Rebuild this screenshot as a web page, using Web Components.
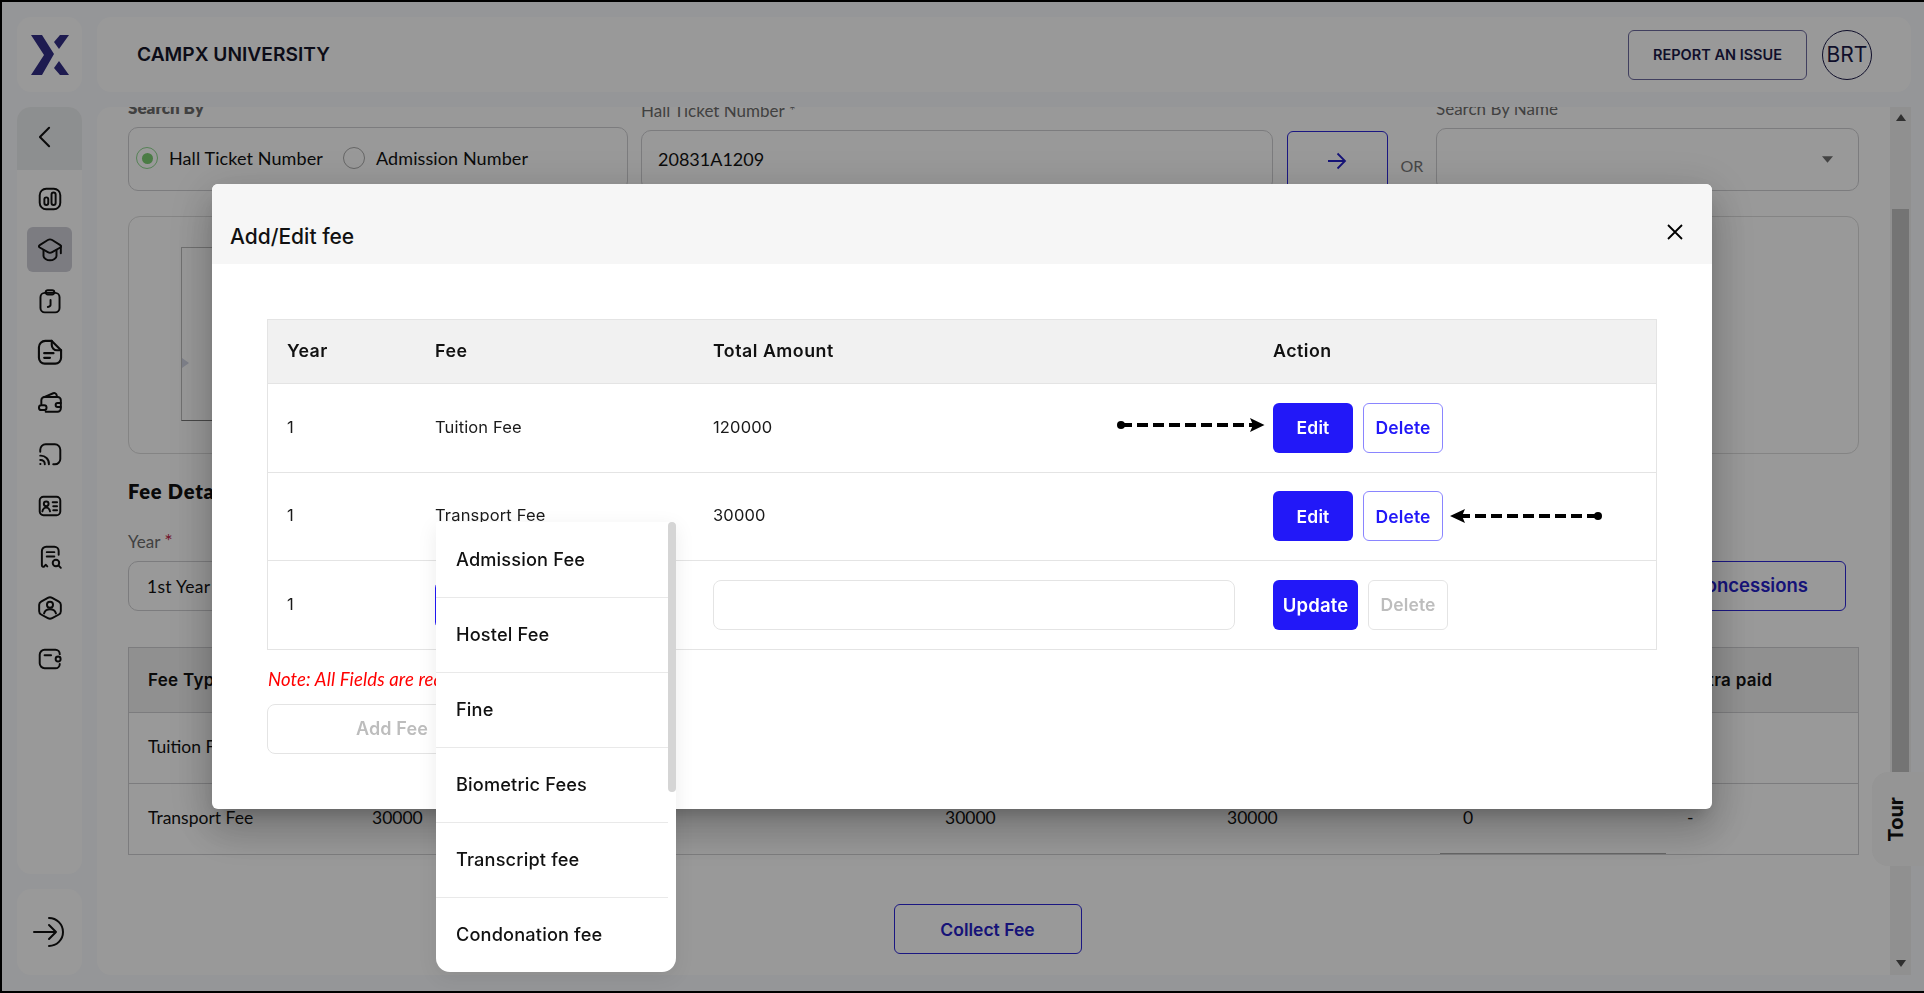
<!DOCTYPE html>
<html lang="en">
<head>
<meta charset="utf-8">
<title>CampX University</title>
<style>
	html, body { margin: 0; height: 100%; }
	body { box-sizing: border-box; height: 993px; overflow: hidden; border: 2px solid #000; border-right: 0; background: #f8fafd; font-family: "Inter", "Liberation Sans", sans-serif; color: #121212; }
</style>
</head>
<body>
<cx-app>
	<cx-sidebar slot="side"></cx-sidebar>
	<cx-header slot="top"></cx-header>
	<cx-fee-form slot="main"></cx-fee-form>
</cx-app>
<cx-tour></cx-tour>
<cx-modal heading="Add/Edit fee">
	<cx-fee-table></cx-fee-table>
</cx-modal>

<script>
const ICONS = {
	chart: `<rect x="2.5" y="2.5" width="19" height="19" rx="6"/><rect x="6.8" y="10.5" width="3.6" height="7" rx="1.8"/><rect x="13.4" y="6" width="3.8" height="11.5" rx="1.9"/>`,
	grad: `<path d="M10 2.800c1.300-.8 2.700-.8 4 0l7.500 4.700c1 .6 1 1.600 0 2.200l-7.500 4.300c-1.300.8-2.700.8-4 0l-7.500-4.300c-1-.6-1-1.600 0-2.200z"/><path d="M6 12v5.500c0 2 3 4 6 4s6-2 6-4V12M22 8.500V15"/>`,
	clock: `<rect x="3.200" y="4.500" width="17.600" height="18" rx="4"/><rect x="8" y="2" width="8" height="4" rx="2"/><path d="M12.500 11v4.500c0 1-1 1.800-2.500 2"/>`,
	doc: `<path d="M8 2.500h5.500l8 8V17a5 5 0 0 1-5 5H7.500a5 5 0 0 1-5-5V8A5.500 5.500 0 0 1 8 2.500z"/><path d="M13.500 2.500v3.500a4.500 4.500 0 0 0 4.500 4.500h3.500M7 13h8M7 17h5"/>`,
	wallets: `<path d="M4 13V9.500a3 3 0 0 1 3-3h12a3 3 0 0 1 3 3V17a3 3 0 0 1-3 3H8"/><path d="M6.500 6.500 15 3c1.500-.5 3 .4 3.200 2l.1 1.500"/><rect x="1.800" y="14" width="7" height="4.500" rx="2.200"/><path d="M22 12h-3a1.800 1.800 0 0 0 0 3.600h3"/>`,
	cast: `<path d="M3 10V8a5 5 0 0 1 5-5h8.500a5 5 0 0 1 5 5v8.500a5 5 0 0 1-5 5H15"/><path d="M3 13.500a7.500 7.500 0 0 1 8 8M3 17.500a3.800 3.800 0 0 1 4.200 4M3 21.200h.2"/>`,
	id: `<rect x="2.500" y="3.500" width="19" height="17" rx="3.500"/><circle cx="8.500" cy="10" r="2.200"/><path d="M5 17c.5-2.500 2-3.500 3.500-3.500s3 1 3.500 3.500M14.500 8.500h4M15 12.200h3.500M15 16h3.500"/>`,
	search: `<path d="M20 10V6.500a4 4 0 0 0-4-4H8.500a4 4 0 0 0-4 4V19.500c0 1.500 1.300 2 2.300 1l1.200-1.300 1.500 1.500"/><path d="M9 7.500h7M9 11.500h7"/><circle cx="17.500" cy="17.500" r="3"/><path d="m20 20 2 2"/>`,
	hex: `<path d="M10 2.600a4 4 0 0 1 4 0l6.200 3.500a3.500 3.500 0 0 1 1.800 3V15a3.500 3.500 0 0 1-1.800 3L14 21.400a4 4 0 0 1-4 0L3.800 18A3.500 3.500 0 0 1 2 15V9.100a3.500 3.500 0 0 1 1.800-3z"/><circle cx="12" cy="9" r="2.800"/><path d="M6.500 17c.7-2.500 3-3.800 5.500-3.800s4.800 1.300 5.500 3.800"/>`,
	wallet: `<path d="M21 7.500a4 4 0 0 0-4-4H7a4.500 4.500 0 0 0-4.500 4.500v8A4.500 4.500 0 0 0 7 20.500h10a4 4 0 0 0 4-4"/><circle cx="19.500" cy="12" r="2.300"/><path d="M7 8.500h6"/>`
};
const NAV = ["chart", "grad", "clock", "doc", "wallets", "cast", "id", "search", "hex", "wallet"];

customElements.define("cx-app",
	class extends HTMLElement {
		connectedCallback(){
			this.attachShadow({ mode: "open" }).innerHTML = `
				<style>
					:host { display: grid; grid-template-columns: 65px 1fr; grid-template-rows: 75px 868px; column-gap: 15px; row-gap: 15px; padding: 15px 13px 0 15px; box-sizing: border-box; height: 989px; }
				</style>
				<slot name="side"></slot>
				<slot name="top"></slot>
				<slot name="main"></slot>
			`;
		}
	}
);

customElements.define("cx-sidebar",
	class extends HTMLElement {
		connectedCallback(){
			const items = NAV.map((name, i) => `
				<div class="item ${i === 1 ? "active" : ""}">
					<svg viewBox="0 0 24 24" width="${name === "doc" ? 28 : 26}" height="${name === "doc" ? 28 : 26}">${ICONS[name]}</svg>
				</div>`).join("");
			this.attachShadow({ mode: "open" }).innerHTML = `
				<style>
					:host { display: flex; flex-direction: column; grid-row: 1 / 3; gap: 15px; }
					.card { background: #fff; border-radius: 14px; }
					.logo { height: 75px; display: flex; align-items: center; justify-content: center; }
					.nav { flex: 1; overflow: hidden; }
					.back { height: 63px; background: #eceef0; display: flex; align-items: center; padding: 0 0 3px 21px; box-sizing: border-box; }
					.items { display: flex; flex-direction: column; align-items: center; padding-top: 6px; }
					.item { width: 45px; height: 45px; margin-bottom: 6.200px; border-radius: 6px; display: flex; align-items: center; justify-content: center; }
					.item.active { background: #cfcfd8; }
					svg { fill: none; stroke: #111; stroke-width: 1.800; stroke-linecap: round; stroke-linejoin: round; }
					.out { height: 86px; display: flex; align-items: center; justify-content: center; }
				</style>
				<div class="card logo">
					<svg viewBox="0 0 38 40" width="38" height="40" style="stroke:none;fill:#322e86">
						<polygon points="0,0 11,0 23,19 11,40 0,40 13,20"/>
						<polygon points="29,0 38,0 28,14 23,7"/>
						<polygon points="28,26 38,40 29,40 23,33"/>
					</svg>
				</div>
				<div class="card nav">
					<div class="back">
						<svg viewBox="0 0 14 24" width="13" height="22" style="stroke-width:2.200"><path d="M12 2 2 12l10 10"/></svg>
					</div>
					<div class="items">${items}</div>
				</div>
				<div class="card out">
					<svg viewBox="0 0 34 32" width="34" height="32" style="stroke-width:2"><path d="M1 16h22M16 9l7 7-7 7M16 2a14 14 0 0 1 0 28"/></svg>
				</div>
			`;
		}
	}
);

customElements.define("cx-header",
	class extends HTMLElement {
		connectedCallback(){
			this.attachShadow({ mode: "open" }).innerHTML = `
				<style>
					:host { display: flex; align-items: center; background: #fff; border-radius: 14px; padding: 0 39px 0 40px; height: 75px; }
					.name { font-size: 19.200px; font-weight: 600; flex: 1; color: #151528; padding-bottom: 2px; }
					button { font: 600 14.500px "Inter", sans-serif; color: #1b1a48; background: none; border: 1px solid #6d6a9e; border-radius: 6px; width: 179px; height: 50px; margin-right: 15px; }
					.who { width: 50px; height: 50px; box-sizing: border-box; border: 1px solid #1b1a48; border-radius: 50%; display: flex; align-items: center; justify-content: center; font-size: 21px; color: #1b1a48; }
				</style>
				<div class="name">CAMPX UNIVERSITY</div>
				<button>REPORT AN ISSUE</button>
				<div class="who">BRT</div>
			`;
		}
	}
);

customElements.define("cx-fee-form",
	class extends HTMLElement {
		connectedCallback(){
			this.attachShadow({ mode: "open" }).innerHTML = `
				<style>
					:host { display: flex; background: #fff; border-radius: 14px 0 0 14px; overflow: hidden; height: 868px; font-family: "Lato", "Liberation Sans", sans-serif; font-size: 18px; }
					.body { flex: 1; padding: 0 31px; min-width: 0; }
					.search { display: flex; margin-top: -17px; height: 101px; align-items: flex-end; }
					.col { display: flex; flex-direction: column; }
					.lab { color: #6d6d6d; font-size: 17px; margin-bottom: 9px; }
					.box { border: 1px solid #cfcfd2; border-radius: 10px; box-sizing: border-box; display: flex; align-items: center; }
					.group { width: 500px; height: 64px; gap: 10px; padding: 0 0 2px 7px; letter-spacing: .1px; }
					.radio { width: 22px; height: 22px; box-sizing: border-box; border: 1px solid #aaa; border-radius: 50%; display: flex; align-items: center; justify-content: center; flex: none; }
					.radio + span { margin-left: 1px; }
					.radio.on { border-color: #8fd98f; }
					.radio.on::after { content: ""; width: 11px; height: 11px; border-radius: 50%; background: #7dcf74; }
					.gap { width: 0; }
					.arrow { width: 102px; height: 60px; margin-left: 14px; border: 1px solid #2d27d9; border-radius: 6px; box-sizing: border-box; display: flex; align-items: center; justify-content: center; }
					.or { width: 49px; padding-left: 13px; box-sizing: border-box; color: #777; font-size: 16px; padding-bottom: 16px; }
					.student { margin-top: 25px; height: 238px; border: 1px solid #dcdcdc; border-radius: 12px; box-sizing: border-box; padding: 30px 52px; }
					.photo { width: 160px; height: 174px; border: 1px solid #bbb; border-bottom-color: #777; box-sizing: border-box; position: relative; }
					.photo::after { content: ""; position: absolute; left: 0; bottom: 52px; border: 5px solid transparent; border-left: 7px solid #d3d6e6; }
					h2 { font-size: 20px; margin: 25px 0 0; height: 24px; line-height: 24px; font-weight: 800; color: #111; letter-spacing: .8px; }
					.year { margin-top: 28px; display: flex; align-items: flex-end; justify-content: space-between; padding-right: 13px; }
					.year .lab { margin-bottom: 9px; }
					.year i { color: #c0264a; font-style: normal; font-size: 20px; line-height: 16px; }
					.year .box { width: 400px; height: 50px; padding-left: 18px; font-size: 17.500px; letter-spacing: .3px; }
					.concess { width: 192px; height: 50px; padding-bottom: 2px; border: 1px solid #2d27d9; border-radius: 6px; box-sizing: border-box; color: #2520c8; font: 600 18.500px "Inter", sans-serif; display: flex; align-items: center; justify-content: center; }
					.fees { margin-top: 36px; border: 1px solid #cfcfd2; }
					.fees > div { display: grid; grid-template-columns: 224px 573px 282px 236px 224px 1fr; padding-left: 19px; align-items: center; box-sizing: border-box; }
					.fees .head { height: 64px; background: #f1f1f1; font: 600 17px "Inter", sans-serif; letter-spacing: .3px; }
					.fees .row { height: 71px; border-top: 1px solid #cfcfd2; font-size: 17.500px; padding-bottom: 3px; }
					.fees .sp { grid-column: span 5; }
					.zero { position: relative; align-self: stretch; display: flex; align-items: center; }
					.zero::after { content: ""; position: absolute; left: -23px; width: 226px; bottom: -3px; border-bottom: 1px solid #aaa; }
					.collect { display: flex; justify-content: center; margin-top: 49px; padding-right: 12px; }
					.collect div { width: 188px; height: 50px; border: 1px solid #2d27d9; border-radius: 6px; box-sizing: border-box; color: #2520c8; font: 600 17.500px "Inter", sans-serif; display: flex; align-items: center; justify-content: center; }
					.bar { width: 21px; flex: none; background: #f1f1f1; display: flex; flex-direction: column; align-items: center; position: relative; }
					.up, .down { width: 0; border: 5px solid transparent; }
					.up { border-bottom: 7px solid #505050; margin-top: 7px; border-top: 0; }
					.thumb { width: 17px; height: 563px; background: #c1c1c1; margin-top: 88px; }
					.down { border-top: 7px solid #505050; border-bottom: 0; margin-top: auto; margin-bottom: 8px; }
				</style>
				<div class="body">
					<div class="search">
						<div class="col">
							<div class="lab" style="font-weight:800">Search By</div>
							<div class="box group">
								<span class="radio on"></span><span>Hall Ticket Number</span>
								<span class="gap"></span>
								<span class="radio"></span><span>Admission Number</span>
							</div>
						</div>
						<div class="col" style="margin-left:13px">
							<div class="lab">Hall Ticket Number *</div>
							<div class="box" style="width:632px;height:61px;padding-left:16px;padding-bottom:4px">20831A1209</div>
						</div>
						<div class="arrow">
							<svg viewBox="0 0 20 18" width="20" height="18" fill="none" stroke="#2520c8" stroke-width="1.800"><path d="M1 9h17M10.500 1.500 18 9l-7.500 7.500"/></svg>
						</div>
						<div class="or">OR</div>
						<div class="col">
							<div class="lab">Search By Name</div>
							<div class="box" style="width:423px;height:63px;justify-content:flex-end;padding-right:25px">
								<svg viewBox="0 0 10 6" width="11" height="7"><path d="M0 0h10L5 6z" fill="#707070"/></svg>
							</div>
						</div>
					</div>
					<div class="student"><div class="photo"></div></div>
					<h2>Fee Details</h2>
					<div class="year">
						<div class="col">
							<div class="lab">Year <i>*</i></div>
							<div class="box">1st Year</div>
						</div>
						<div class="concess">Concessions</div>
					</div>
					<div class="fees">
						<div class="head"><span class="sp">Fee Type</span><span>Extra paid</span></div>
						<div class="row"><span class="sp">Tuition Fee</span></div>
						<div class="row">
							<span>Transport Fee</span><span>30000</span><span>30000</span><span>30000</span>
							<span class="zero">0</span><span>-</span>
						</div>
					</div>
					<div class="collect"><div>Collect Fee</div></div>
				</div>
				<div class="bar"><span class="up"></span><span class="thumb"></span><span class="down"></span></div>
			`;
		}
	}
);

customElements.define("cx-tour",
	class extends HTMLElement {
		connectedCallback(){
			this.attachShadow({ mode: "open" }).innerHTML = `
				<style>
					:host { position: fixed; right: 0; top: 772px; width: 52px; height: 94px; background: #f8f8f8; border-radius: 16px 0 0 16px; display: flex; align-items: center; justify-content: center; padding-right: 5px; box-sizing: border-box; }
					span { writing-mode: vertical-rl; transform: rotate(180deg); font: 700 20px "Inter", sans-serif; color: #111; }
				</style>
				<span>Tour</span>
			`;
		}
	}
);

customElements.define("cx-modal",
	class extends HTMLElement {
		connectedCallback(){
			this.attachShadow({ mode: "open" }).innerHTML = `
				<style>
					:host { position: fixed; left: 2px; top: 2px; right: 0; bottom: 2px; background: rgba(0,0,0,.4); display: flex; align-items: center; justify-content: center; box-sizing: border-box; }
					.dialog { width: 1500px; height: 625px; margin-left: -2px; background: #fff; border-radius: 6px; box-shadow: 0 11px 15px -7px rgba(0,0,0,.2), 0 24px 38px 3px rgba(0,0,0,.14), 0 9px 46px 8px rgba(0,0,0,.12); }
					.head { height: 80px; background: #f6f6f6; border-radius: 6px 6px 0 0; display: flex; align-items: center; justify-content: space-between; padding: 0 29px 0 18px; box-sizing: border-box; }
					.title { font-size: 21px; font-weight: 500; color: #111; padding-top: 24px; }
					.close { padding-top: 16px; display: flex; }
					.content { padding: 55px 55px 0; }
				</style>
				<div class="dialog">
					<div class="head">
						<div class="title"></div>
						<div class="close"><svg viewBox="0 0 16 16" width="16" height="16" fill="none" stroke="#000" stroke-width="1.800"><path d="m1 1 14 14M15 1 1 15"/></svg></div>
					</div>
					<div class="content"><slot></slot></div>
				</div>
			`;
			this.shadowRoot.querySelector(".title").textContent = this.getAttribute("heading");
		}
	}
);

customElements.define("cx-fee-table",
	class extends HTMLElement {
		connectedCallback(){
			const options = ["Admission Fee", "Hostel Fee", "Fine", "Biometric Fees", "Transcript fee", "Condonation fee"];
			this.attachShadow({ mode: "open" }).innerHTML = `
				<style>
					:host { display: block; position: relative; font-size: 16.500px; color: #1a1a1a; letter-spacing: .15px; }
					.table { border: 1px solid #e4e4e4; width: 1390px; box-sizing: border-box; }
					.row { display: grid; grid-template-columns: 148px 278px 560px 1fr; align-items: center; height: 88.500px; border-top: 1px solid #e4e4e4; box-sizing: border-box; }
					.row > * { padding-left: 19px; }
					.row > span { padding-bottom: 2px; }
					.row.head { height: 63px; border-top: 0; background: #f1f1f1; font-weight: 600; font-size: 17.800px; letter-spacing: .5px; color: #111; }
					.actions { display: flex; gap: 10px; }
					.btn { height: 50px; width: 80px; border-radius: 6px; box-sizing: border-box; display: flex; align-items: center; justify-content: center; font-weight: 600; font-size: 17.500px; }
					.fill { background: #2218f8; color: #fff; }
					.line { border: 1px solid #8a85ff; color: #2218f8; }
					.off { border: 1px solid #e4e4e4; color: #bdbdbd; }
					.wide { width: 85px; font-size: 18.500px; }
					.fieldwrap { display: flex; }
					.field { height: 50px; border: 1px solid #e4e4e4; border-radius: 8px; box-sizing: border-box; width: 522px; }
					.field.focus { width: 238px; border-color: #2218f8; }
					.note { margin: 19px 0 0 1px; font: italic 18.500px "Lato", "Liberation Sans", sans-serif; color: #f00; height: 20px; line-height: 20px; }
					.add { margin-top: 15px; width: 250px; height: 50px; border: 1px solid #e4e4e4; border-radius: 8px; box-sizing: border-box; display: flex; align-items: center; justify-content: center; font-weight: 600; font-size: 18px; color: #bdbdbd; }
					.menu { position: absolute; left: 169px; top: 203px; width: 240px; height: 450px; background: #fff; border-radius: 2px 2px 14px 14px; box-shadow: 0 5px 20px rgba(0,0,0,.08); display: flex; overflow: hidden; }
					.list { flex: 1; }
					.opt { height: 75px; box-sizing: border-box; display: flex; align-items: center; padding: 0 0 2px 20px; font-size: 18.200px; font-weight: 500; color: #111; border-top: 1px solid #e9e9e9; }
					.opt:first-child { border-top: 0; }
					.scroll { width: 8px; height: 270px; background: #d5d5d5; border-radius: 4px; }
					.hint { position: absolute; }
				</style>
				<div class="table">
					<div class="row head"><span>Year</span><span>Fee</span><span>Total Amount</span><span>Action</span></div>
					<div class="row"><span>1</span><span>Tuition Fee</span><span>120000</span>
						<div class="actions"><div class="btn fill">Edit</div><div class="btn line">Delete</div></div></div>
					<div class="row"><span>1</span><span>Transport Fee</span><span>30000</span>
						<div class="actions"><div class="btn fill">Edit</div><div class="btn line">Delete</div></div></div>
					<div class="row"><span>1</span><div class="fieldwrap"><div class="field focus"></div></div><div class="fieldwrap"><div class="field"></div></div>
						<div class="actions"><div class="btn fill wide">Update</div><div class="btn off">Delete</div></div></div>
				</div>
				<div class="note">Note: All Fields are required</div>
				<div class="add">Add Fee</div>
				<div class="menu">
					<div class="list">${options.map(o => `<div class="opt">${o}</div>`).join("")}</div>
					<div class="scroll"></div>
				</div>
				<svg class="hint" style="left:849px;top:98px" width="154" height="16" viewBox="0 0 154 16">
					<circle cx="5" cy="8" r="4"/><path d="M5 8h136" stroke="#000" stroke-width="4" stroke-dasharray="11 5"/><path d="M134 1l14.500 7L134 15l3-7z"/>
				</svg>
				<svg class="hint" style="left:1180px;top:189px" width="158" height="16" viewBox="0 0 158 16">
					<circle cx="151" cy="8" r="4"/><path d="M151 8H12" stroke="#000" stroke-width="4" stroke-dasharray="11 5"/><path d="M18 1 3 8l15 7-3-7z"/>
				</svg>
			`;
		}
	}
);
</script>
</body>
</html>
